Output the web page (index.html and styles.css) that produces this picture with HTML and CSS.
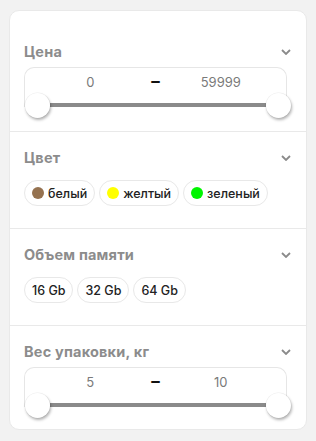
FILE: index.html
```html
<!DOCTYPE html>
<html lang="ru">
<head>
<meta charset="utf-8">
<link rel="stylesheet" href="styles.css">
</head>
<body>
<div class="card">
  <section class="section">
    <div class="head"><span class="title">Цена</span><svg class="chev" width="10" height="6" viewBox="0 0 10 6"><path d="M1 1l4 4 4-4" fill="none" stroke="#8a8a8a" stroke-width="1.8"/></svg></div>
    <div class="range">
      <div class="range-box">
        <span class="val">0</span><span class="dash">–</span><span class="val">59999</span>
      </div>
      <div class="slider"><span class="thumb"></span><span class="track"></span><span class="thumb"></span></div>
    </div>
  </section>
  <section class="section">
    <div class="head"><span class="title">Цвет</span><svg class="chev" width="10" height="6" viewBox="0 0 10 6"><path d="M1 1l4 4 4-4" fill="none" stroke="#8a8a8a" stroke-width="1.8"/></svg></div>
    <div class="chips">
      <span class="chip"><span class="dot brown"></span>белый</span>
      <span class="chip"><span class="dot yellow"></span>желтый</span>
      <span class="chip"><span class="dot green"></span>зеленый</span>
    </div>
  </section>
  <section class="section">
    <div class="head"><span class="title">Объем памяти</span><svg class="chev" width="10" height="6" viewBox="0 0 10 6"><path d="M1 1l4 4 4-4" fill="none" stroke="#8a8a8a" stroke-width="1.8"/></svg></div>
    <div class="chips">
      <span class="chip plain">16 Gb</span>
      <span class="chip plain">32 Gb</span>
      <span class="chip plain">64 Gb</span>
    </div>
  </section>
  <section class="section last">
    <div class="head"><span class="title">Вес упаковки, кг</span><svg class="chev" width="10" height="6" viewBox="0 0 10 6"><path d="M1 1l4 4 4-4" fill="none" stroke="#8a8a8a" stroke-width="1.8"/></svg></div>
    <div class="range">
      <div class="range-box">
        <span class="val">5</span><span class="dash">–</span><span class="val">10</span>
      </div>
      <div class="slider"><span class="thumb"></span><span class="track"></span><span class="thumb"></span></div>
    </div>
  </section>
</div>
</body>
</html>
```
FILE: styles.css
```css
* { box-sizing: border-box; }
html, body { margin: 0; padding: 0; }
body {
  background: #f2f2f2;
  font-family: Inter, "Noto Sans", sans-serif;
  width: 316px;
  height: 441px;
  padding: 10px 0 0 9px;
}
.card {
  width: 298px;
  height: 420px;
  background: #fff;
  border: 1px solid #e9e9e9;
  border-radius: 10px;
  padding-top: 15px;
}
.section {
  padding: 18px 15px 22px 14px;
  border-bottom: 1px solid #e9e9e9;
}
.section:first-child { padding-bottom: 14px; }
.section.last { border-bottom: 0; padding-bottom: 0; }
.head {
  display: flex;
  justify-content: space-between;
  align-items: center;
  height: 16px;
}
.title {
  font-size: 14.5px;
  font-weight: 700;
  color: #8c8c8c;
  line-height: 16px;
  letter-spacing: 0.2px;
}
.range { margin-top: 7px; }
.range-box {
  margin-right: 4px;
  height: 40px;
  border: 1px solid #e6e6e6;
  border-bottom: 0;
  border-radius: 10px 10px 0 0;
  display: grid;
  grid-template-columns: 1fr 20px 1fr;
  padding: 6px 10px 0;
  align-items: start;
  line-height: 16px;
}
.val {
  text-align: center;
  font-size: 13px;
  color: #7a7a7a;
}
.dash {
  text-align: center;
  font-size: 17px;
  font-weight: 700;
  color: #111;
  line-height: 15px;
}
.slider {
  display: flex;
  align-items: center;
  height: 24px;
  margin-top: -14px;
  margin-left: 1px;
}
.track {
  flex: 1;
  height: 4px;
  background: #8a8a8a;
}
.thumb {
  flex: none;
  width: 25px;
  height: 25px;
  border-radius: 50%;
  background: #fff;
  box-shadow: 1px 2px 3px rgba(0,0,0,0.3), 0 0 0 0.5px rgba(0,0,0,0.06);
  position: relative;
  z-index: 1;
}
.chips {
  margin-top: 14px;
  display: flex;
  gap: 4px;
}
.chip {
  display: inline-flex;
  align-items: center;
  height: 26px;
  padding: 0 7px;
  border: 1px solid #e8e8e8;
  border-radius: 13px;
  font-size: 12.5px;
  font-weight: 500;
  color: #222;
  gap: 4px;
}
.chip.plain { padding: 0 7px; }
.dot {
  width: 12px;
  height: 12px;
  border-radius: 50%;
}
.brown { background: #957250; }
.yellow { background: #ffff00; }
.green { background: #00f500; }
```
